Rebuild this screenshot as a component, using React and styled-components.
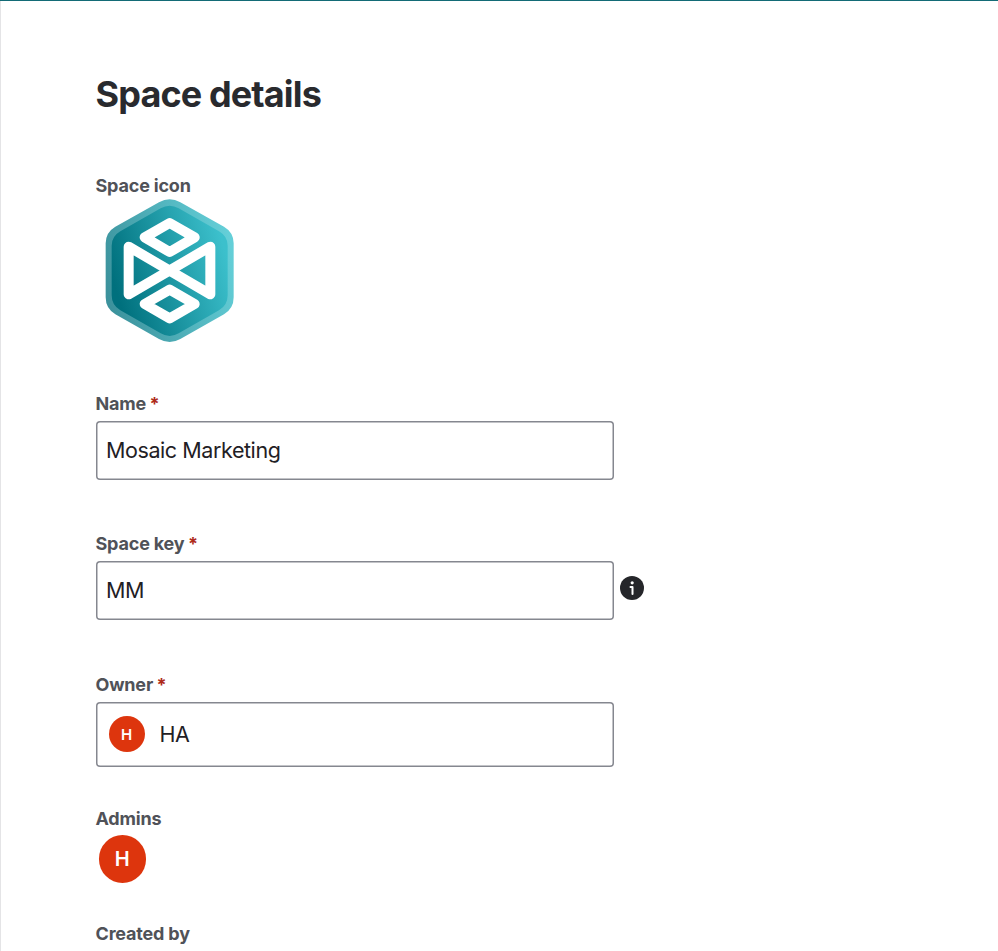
import React from "react";
import styled, { createGlobalStyle } from "styled-components";

const GlobalStyle = createGlobalStyle`
  *, *::before, *::after { box-sizing: border-box; }
  body { margin: 0; background: #fff; overflow: hidden; }
`;

const Page = styled.main`
  height: 950px;
  overflow: hidden;
  display: flex;
  flex-direction: column;
  align-items: flex-start;
  padding: 69px 0 0 94.5px;
  border-left: 1px solid #e4e4e6;
  background: #fff;
  color: #1f2024;
  font-family: Inter, sans-serif;
`;

const TopBar = styled.div`
  height: 1px;
  background: #136b76;
`;

const Title = styled.h1`
  margin: 0;
  font-size: 36px;
  line-height: 48px;
  font-weight: 700;
  font-variation-settings: "opsz" 32;
  letter-spacing: -0.87px;
  color: #292a2e;
`;

const Field = styled.section`
  display: flex;
  flex-direction: column;
  align-items: flex-start;
  margin-top: ${(p) => p.$gap}px;
`;

const Label = styled.div`
  display: flex;
  gap: 3.5px;
  height: 24px;
  font-size: 18px;
  line-height: 24px;
  font-weight: 700;
  letter-spacing: -0.18px;
  white-space: nowrap;
  color: #505258;
`;

const Required = styled.span`
  color: #ae2a19;
`;

const Row = styled.div`
  display: flex;
  gap: 6px;
  margin-top: 5px;
`;

const Control = styled.div`
  display: flex;
  align-items: center;
  width: 518.5px;
  height: ${(p) => p.$height || 59}px;
  padding: 0 ${(p) => (p.$withAvatar ? 13 : 10.5)}px 1px;
  gap: 15px;
  border-radius: 4px;
  box-shadow: inset 0 0 0 1.5px #85878f;
  font-size: 21.5px;
  line-height: 30px;
  letter-spacing: -0.42px;
`;

const Avatar = styled.span`
  display: grid;
  place-items: center;
  flex: none;
  width: ${(p) => p.$size}px;
  height: ${(p) => p.$size}px;
  border-radius: 50%;
  background: #dd350d;
  color: #fff;
  font-size: ${(p) => p.$font}px;
  line-height: 1;
  font-weight: 600;
  letter-spacing: 0;
`;

const AdminList = styled.div`
  display: flex;
  padding: 4px 0 0 3px;
`;

const Logo = styled.svg`
  display: block;
  width: 150px;
  height: 160px;
  margin: -8px 0 0 -0.5px;
`;

const InfoIcon = styled.svg`
  width: 24px;
  height: 24px;
  margin-top: 15px;
`;

function SpaceLogo() {
  return (
    <Logo viewBox="0 0 450 480" role="img" aria-label="Space icon">
      <defs>
        <linearGradient id="rim" x1="32" y1="290" x2="416" y2="190" gradientUnits="userSpaceOnUse">
          <stop offset="0" stopColor="#3c929c" />
          <stop offset="1" stopColor="#64cfd8" />
        </linearGradient>
        <linearGradient id="face" x1="60" y1="290" x2="392" y2="190" gradientUnits="userSpaceOnUse">
          <stop offset="0" stopColor="#00707d" />
          <stop offset="1" stopColor="#3cc0cc" />
        </linearGradient>
      </defs>
      <path
        fill="url(#rim)"
        d="M192 37Q224 19 256 37L387 110Q416 127 416 160V322Q416 356 387 373L256 447Q224 465 192 447L61 373Q32 356 32 322V160Q32 127 61 110Z"
      />
      <path
        fill="url(#face)"
        d="M197 55Q224 39 251 55L372 124Q398 139 398 167V316Q398 346 372 361L251 430Q224 446 197 430L76 361Q50 346 50 316V167Q50 139 76 124Z"
      />
      <g fill="none" stroke="#fff" strokeWidth="30" strokeLinejoin="round">
        <path d="M224 99 299 142 224 186 149 142Z" />
        <path d="M224 299 299 342 224 385 149 342Z" />
        <path d="M101 170 346 313V170L101 313Z" />
      </g>
    </Logo>
  );
}

function RequiredLabel({ children }) {
  return (
    <Label>
      {children}
      <Required>*</Required>
    </Label>
  );
}

export default function App() {
  return (
    <>
      <GlobalStyle />
      <TopBar />
      <Page>
        <Title>Space details</Title>
        <Field $gap={55.5}>
          <Label>Space icon</Label>
          <SpaceLogo />
        </Field>
        <Field $gap={42.5}>
          <RequiredLabel>Name</RequiredLabel>
          <Row>
            <Control>Mosaic Marketing</Control>
          </Row>
        </Field>
        <Field $gap={52}>
          <RequiredLabel>Space key</RequiredLabel>
          <Row>
            <Control>MM</Control>
            <InfoIcon viewBox="0 0 24 24" aria-label="Information">
              <circle cx="12" cy="12" r="12" fill="#25262a" />
              <circle cx="12.2" cy="6.8" r="1.6" fill="#fff" />
              <path d="M10.5 11.1H12.5V18" fill="none" stroke="#fff" strokeWidth="2" strokeLinecap="round" strokeLinejoin="round" />
            </InfoIcon>
          </Row>
        </Field>
        <Field $gap={53}>
          <RequiredLabel>Owner</RequiredLabel>
          <Row>
            <Control $height={65} $withAvatar>
              <Avatar $size={36} $font={15}>H</Avatar>
              HA
            </Control>
          </Row>
        </Field>
        <Field $gap={40}>
          <Label>Admins</Label>
          <AdminList>
            <Avatar $size={47.5} $font={20}>H</Avatar>
          </AdminList>
        </Field>
        <Field $gap={39}>
          <Label>Created by</Label>
        </Field>
      </Page>
    </>
  );
}
